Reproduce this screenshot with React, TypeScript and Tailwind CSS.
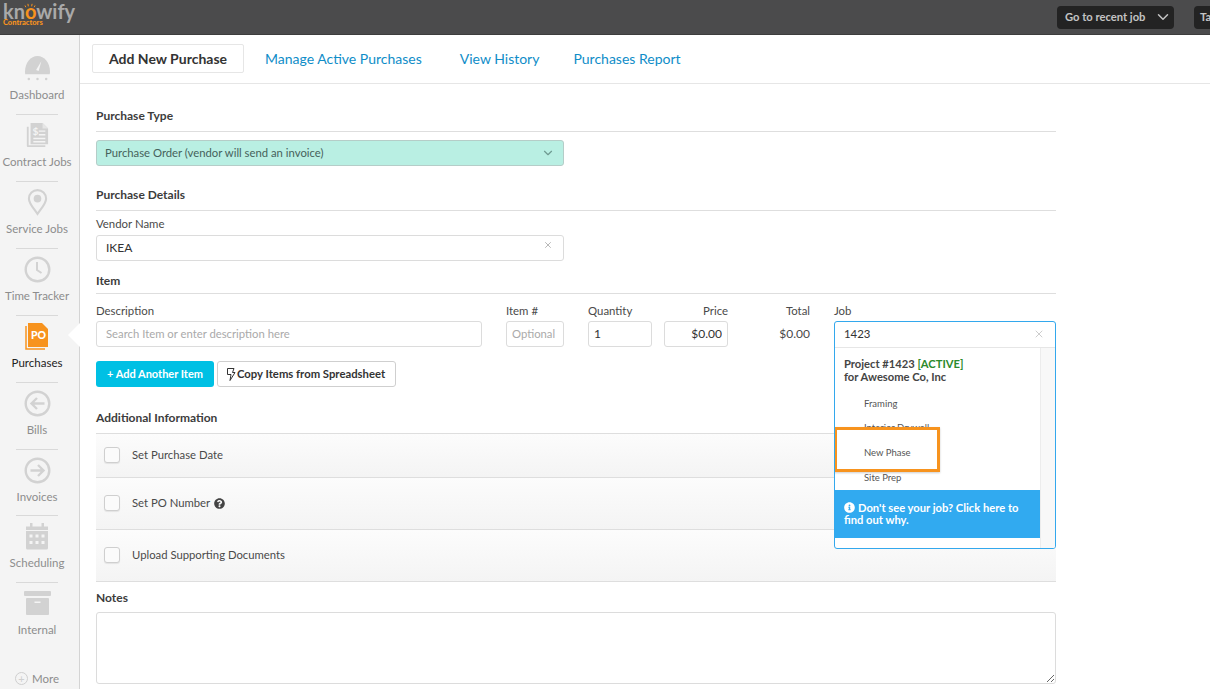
import { ChevronDown, X } from 'lucide-react';
import { FaInfoCircle, FaQuestionCircle } from 'react-icons/fa';
import type { ReactNode } from 'react';

const GaugeIcon = () => (
    <svg width="27" height="26" viewBox="0 0 28 27" fill="#d2d2d2">
        <path d="M1 17.5C1 8 7 1 14 1s13 7 13 16.5c0 .9-.1 1.7-.3 2.5H1.300C1.100 19.200 1 18.400 1 17.500Z" />
        <path d="M12.500 15.500 18 6.500l-2.800 10Z" fill="#f4f4f4" />
        <circle cx="5" cy="25" r="1.300" />
        <circle cx="14" cy="25" r="1.300" />
        <circle cx="23" cy="25" r="1.300" />
    </svg>
);

const ContractIcon = () => (
    <svg width="24" height="26" viewBox="0 0 26 28" fill="#d2d2d2">
        <path d="M2 5h2v20h18v2H3a1 1 0 0 1-1-1Z" />
        <path d="M6 1h13l6 6v17H6Z" />
        <path d="M19 1v6h6Z" fill="#e6e6e6" />
        <text x="8" y="14" fontSize="11" fontWeight="700" fill="#f4f4f4" fontFamily="Lato, sans-serif">$</text>
        <path d="M15 9h7v1.500h-7ZM15 13h7v1.500h-7ZM9 17h13v1.500H9ZM9 20.500h13V22H9Z" fill="#f4f4f4" />
    </svg>
);

const PinIcon = () => (
    <svg width="21" height="27" viewBox="0 0 22 28">
        <path d="M11 26C7 20 2 15 2 10a9 9 0 0 1 18 0c0 5-5 10-9 16Z" fill="none" stroke="#d2d2d2" strokeWidth="2.200" />
        <circle cx="11" cy="10" r="4" fill="#d2d2d2" />
    </svg>
);

const ClockIcon = () => (
    <svg width="27" height="27" viewBox="0 0 27 27" fill="none" stroke="#d2d2d2" strokeWidth="2.400">
        <circle cx="13.500" cy="13.500" r="11.800" />
        <path d="M13 6v8l4.500 3" strokeWidth="2" />
    </svg>
);

const ArrowCircleIcon = ({ right }: { right?: boolean }) => (
    <svg width="27" height="27" viewBox="0 0 27 27" fill="none" stroke="#d2d2d2" strokeWidth="2.400">
        <circle cx="13.500" cy="13.500" r="11.800" />
        {right ? <path d="M6.500 13.500h13M14 8l5.500 5.500L14 19" /> : <path d="M20.500 13.500h-13M13 8l-5.500 5.500L13 19" />}
    </svg>
);

const CalendarIcon = () => (
    <svg width="24" height="27" viewBox="0 0 24 27" fill="#d2d2d2">
        <path d="M5 0h2.500v4H5ZM16.500 0H19v4h-2.500Z" />
        <path d="M1 3.500h22V7H1Z" />
        <path d="M1 8h22v17a1.500 1.500 0 0 1-1.500 1.500h-19A1.500 1.500 0 0 1 1 25Z" />
        <path d="M4.500 11.500h3v3h-3ZM10.500 11.500h3v3h-3ZM16.500 11.500h3v3h-3ZM4.500 18h3v3h-3ZM10.500 18h3v3h-3ZM16.500 18h3v3h-3Z" fill="#f4f4f4" />
    </svg>
);

const ArchiveIcon = () => (
    <svg width="27" height="25" viewBox="0 0 27 25" fill="#d2d2d2">
        <rect x="0" y="0" width="27" height="5" rx="1" />
        <rect x="2" y="7" width="23" height="17" rx="1" />
        <path d="M10.500 10.500h6V12h-6Z" fill="#f4f4f4" />
    </svg>
);

const PoIcon = () => (
    <svg width="24" height="27" viewBox="0 0 24 27">
        <path d="M1 3v23h19" fill="none" stroke="#f7931e" strokeWidth="1.500" />
        <path d="M3 0h14l6 6v18H3Z" fill="#f7931e" />
        <text x="6" y="16" fontSize="10.500" fontWeight="900" fill="#fff" fontFamily="Lato, sans-serif">PO</text>
    </svg>
);

const BoltIcon = () => (
    <svg width="10" height="13" viewBox="0 0 10 13" fill="none" stroke="#333" strokeWidth="1" strokeLinejoin="round">
        <path d="M1.500.5h6.500L6.500 4.500h2.500L4 12.500l1-6H1.500Z" />
    </svg>
);

const navItems = [
    { label: 'Dashboard', icon: <GaugeIcon /> },
    { label: 'Contract Jobs', icon: <ContractIcon /> },
    { label: 'Service Jobs', icon: <PinIcon /> },
    { label: 'Time Tracker', icon: <ClockIcon /> },
    { label: 'Purchases', icon: <PoIcon />, active: true },
    { label: 'Bills', icon: <ArrowCircleIcon /> },
    { label: 'Invoices', icon: <ArrowCircleIcon right />, short: true },
    { label: 'Scheduling', icon: <CalendarIcon /> },
    { label: 'Internal', icon: <ArchiveIcon />, last: true },
];

const SectionTitle = ({ children, className }: { children: ReactNode; className: string }) => (
    <div className={`text-[12px] leading-[17px] font-bold text-[#3c3c3c] border-b border-[#dedede] ${className}`}>
        {children}
    </div>
);

const Label = ({ children, className = '' }: { children: ReactNode; className?: string }) => (
    <div className={`text-[11.400px] leading-[16px] text-[#4a4a4a] ${className}`}>{children}</div>
);

const inputClass =
    'h-[26px] w-full rounded-[3px] border border-[#dcdcdc] bg-white px-[9px] text-[12px] text-[#333] placeholder:text-[11.300px] placeholder:text-[#aaa] outline-none';

const CheckRow = ({ height, children }: { height: string; children: ReactNode }) => (
    <div className={`flex items-center gap-3 border-b border-[#dedede] bg-gradient-to-b from-[#fcfcfc] to-[#f4f4f4] pl-2 text-[11.300px] text-[#4a4a4a] ${height}`}>
        <span className="h-4 w-4 rounded-[3px] border border-[#cfcfcf] bg-[#fbfbfb] shadow-[0_1px_1px_rgba(0,0,0,0.08)]" />
        {children}
    </div>
);

export default function App() {
    return (
        <div className="h-[689px] w-[1210px] overflow-hidden bg-white font-['Lato',sans-serif]">
            {/* Top bar */}
            <header className="flex h-[35px] items-center border-b border-[#3d3d3d] bg-[#4b4b4c]">
                <div className="relative ml-[3px] -mt-[6px] w-[72px]">
                    <div className="text-[20px] leading-[18px] font-bold text-[#a9a9a9]">
                        kn<span className="text-[#f7931e]">o</span>wify
                    </div>
                    <div className="whitespace-nowrap text-[7.500px] leading-[6px] font-black text-[#f7931e]">Contractors</div>
                    <svg className="absolute left-[21px] top-[1px]" width="12" height="5" viewBox="0 0 14 6" stroke="#f7931e" strokeWidth="1.200">
                        <path d="M2 5 1 3M5 4 4.500 1M9 4l.5-3M12 5l1-2" />
                    </svg>
                </div>
                <button className="ml-auto flex h-[23px] w-[117px] items-center justify-between whitespace-nowrap rounded-[4px] bg-[#232323] pl-2 pr-[2px] text-[11.200px] font-bold text-[#c4c4c4]">
                    Go to recent job
                    <ChevronDown className="h-[18px] w-[18px]" strokeWidth={2} />
                </button>
                <button className="ml-5 h-[23px] w-4 rounded-l-[4px] bg-[#232323] pl-[6px] text-left text-[11.200px] font-bold text-[#c4c4c4]">
                    Ta
                </button>
            </header>

            <div className="flex h-[654px]">
                {/* Sidebar */}
                <nav className="flex w-[80px] shrink-0 flex-col border-r border-[#d4d4d4] bg-[#f4f4f4] pr-[5px] pt-[12px]">
                    {navItems.map((item) => (
                        <div key={item.label} className={`relative flex flex-col items-center ${item.short ? 'h-[66px]' : 'h-[67px]'}`}>
                            <div className="mt-[4px] flex h-[34px] items-center justify-center">{item.icon}</div>
                            <div className={`mt-[3px] whitespace-nowrap text-[11.500px] leading-[14px] ${item.active ? 'text-[#222]' : 'text-[#8d8d8d]'}`}>
                                {item.label}
                            </div>
                            {!item.last && <div className="absolute -bottom-px h-px w-[42px] bg-[#d9d9d9]" />}
                            {item.active && (
                                <div className="absolute -right-[6px] top-[8px] h-0 w-0 border-y-[12px] border-r-[12px] border-y-transparent border-r-white" />
                            )}
                        </div>
                    ))}
                    <div className="mt-[21px] flex items-center justify-center gap-1 text-[11.500px] text-[#8d8d8d]">
                        <span className="flex h-[13px] w-[13px] items-center justify-center rounded-full border border-[#cfcfcf] text-[11px] leading-none text-[#cfcfcf]">+</span>
                        More
                    </div>
                </nav>

                <main className="min-w-0 flex-1">
                    {/* Tabs */}
                    <div className="flex h-[49px] items-start border-b border-[#e6e6e6] pl-3 pt-[9px] text-[14px] leading-[29px] text-[#0f8dc8]">
                        <div className="h-[29px] w-[152px] rounded-[2px] border border-[#e6e6e6] text-center leading-[28px] font-bold text-[#333]">
                            Add New Purchase
                        </div>
                        <a className="ml-[21px]">Manage Active Purchases</a>
                        <a className="ml-[38px]">View History</a>
                        <a className="ml-[34px]">Purchases Report</a>
                    </div>

                    <div className="ml-4 w-[960px]">
                        <SectionTitle className="mt-[23px] pb-[7px]">Purchase Type</SectionTitle>
                        <div className="mt-2 flex h-[26px] w-[468px] items-center justify-between rounded-[3px] border border-[#b5cdc8] bg-[#b9efe3] pl-2 pr-2 text-[11.300px] text-[#46625c]">
                            Purchase Order (vendor will send an invoice)
                            <ChevronDown className="h-[14px] w-[14px] text-[#6f9a91]" strokeWidth={2} />
                        </div>

                        <SectionTitle className="mt-[20px] pb-[7px]">Purchase Details</SectionTitle>
                        <Label className="mt-[5px]">Vendor Name</Label>
                        <div className="relative mt-[2px] w-[468px]">
                            <input className={inputClass} value="IKEA" readOnly />
                            <X className="absolute right-[11px] top-[6px] h-[10px] w-[10px] text-[#aaa]" />
                        </div>

                        <SectionTitle className="mt-[11px] pb-[4px]">Item</SectionTitle>
                        <div className="mt-[9px] flex items-start">
                            <div className="w-[386px]">
                                <Label>Description</Label>
                                <input className={`${inputClass} mt-[2px]`} placeholder="Search Item or enter description here" readOnly />
                            </div>
                            <div className="ml-6 w-[58px]">
                                <Label>Item #</Label>
                                <input className={`${inputClass} mt-[2px] !px-[5px]`} placeholder="Optional" readOnly />
                            </div>
                            <div className="ml-6 w-16">
                                <Label>Quantity</Label>
                                <input className={`${inputClass} mt-[2px] !px-[5px]`} value="1" readOnly />
                            </div>
                            <div className="ml-3 w-16">
                                <Label className="text-right">Price</Label>
                                <input className={`${inputClass} mt-[2px] !px-[5px] text-right`} value="$0.00" readOnly />
                            </div>
                            <div className="ml-3 w-[70px] text-right">
                                <Label>Total</Label>
                                <div className="mt-[2px] text-[12px] leading-[26px] text-[#4a4a4a]">$0.00</div>
                            </div>
                            <div className="ml-6 w-[222px]">
                                <Label>Job</Label>
                                <div className="relative mt-[2px] h-[26px]">
                                    {/* Job dropdown */}
                                    <div className="absolute inset-x-0 top-0 z-10 h-[228px] overflow-hidden rounded-[3px] border border-[#33a8ed] bg-white">
                                        <div className="flex h-[26px] items-center justify-between border-b border-[#e6e6e6] pl-[9px] pr-[10px] text-[11.400px] text-[#333]">
                                            1423
                                            <X className="h-3 w-3 text-[#bbb]" strokeWidth={1.500} />
                                        </div>
                                        <div className="flex h-[200px]">
                                            <div className="w-[205px]">
                                                <div className="pl-[9px] pt-[9px] text-[11.200px] leading-[13px] font-bold text-[#444]">
                                                    Project #1423 <span className="text-[#2c8a2c]">[ACTIVE]</span>
                                                    <br />
                                                    for Awesome Co, Inc
                                                </div>
                                                <div className="mb-[-1.200px] mt-[9px] pl-[29px] text-[9.500px] leading-[24.800px] text-[#555]">
                                                    <div>Framing</div>
                                                    <div>Interior Drywall</div>
                                                    <div className="h-[24.800px]" />
                                                    <div>Site Prep</div>
                                                </div>
                                                <div className="relative h-[48px] bg-[#31aaf0] pl-[9px] pt-[12px] text-[11.200px] leading-[12px] font-bold text-white">
                                                    <FaInfoCircle className="mr-[3px] inline h-[11px] w-[11px] align-[-1px]" />
                                                    Don't see your job? Click here to find out why.
                                                </div>
                                            </div>
                                            <div className="flex-1 border-l border-[#ececec] bg-[#f8f8f8]" />
                                        </div>
                                        {/* Highlight callout */}
                                        <div className="absolute left-[-1px] top-[105px] flex h-[45px] w-[106px] items-center border-[3px] border-[#f7931e] bg-white pl-[27px] pt-[8px] text-[9.500px] text-[#555] shadow-[0_1px_2px_rgba(0,0,0,0.2)]">
                                            New Phase
                                        </div>
                                    </div>
                                </div>
                            </div>
                        </div>

                        <div className="mt-[14px] flex gap-[3px]">
                            <button className="h-[26px] w-[118px] rounded-[3px] bg-[#00c0e4] pt-px text-[11px] font-bold text-white">
                                + Add Another Item
                            </button>
                            <button className="flex h-[26px] w-[179px] items-center gap-[1px] rounded-[3px] border border-[#cfcfcf] bg-white pl-[8px] pt-px text-[11.300px] font-bold text-[#333]">
                                <BoltIcon />
                                Copy Items from Spreadsheet
                            </button>
                        </div>

                        <SectionTitle className="mt-[22px] pb-[7px]">Additional Information</SectionTitle>
                        <CheckRow height="h-[44px]">Set Purchase Date</CheckRow>
                        <CheckRow height="h-[52px]">
                            <span className="flex items-center gap-1">
                                Set PO Number
                                <FaQuestionCircle className="h-[11px] w-[11px] text-[#444]" />
                            </span>
                        </CheckRow>
                        <CheckRow height="h-[52px]">Upload Supporting Documents</CheckRow>

                        <div className="mt-2 text-[12px] leading-[16px] font-bold text-[#3c3c3c]">Notes</div>
                        <textarea className="mt-[6px] block h-[72px] w-full rounded-[3px] border border-[#dcdcdc] bg-white outline-none" readOnly />
                    </div>
                </main>
            </div>
        </div>
    );
}
